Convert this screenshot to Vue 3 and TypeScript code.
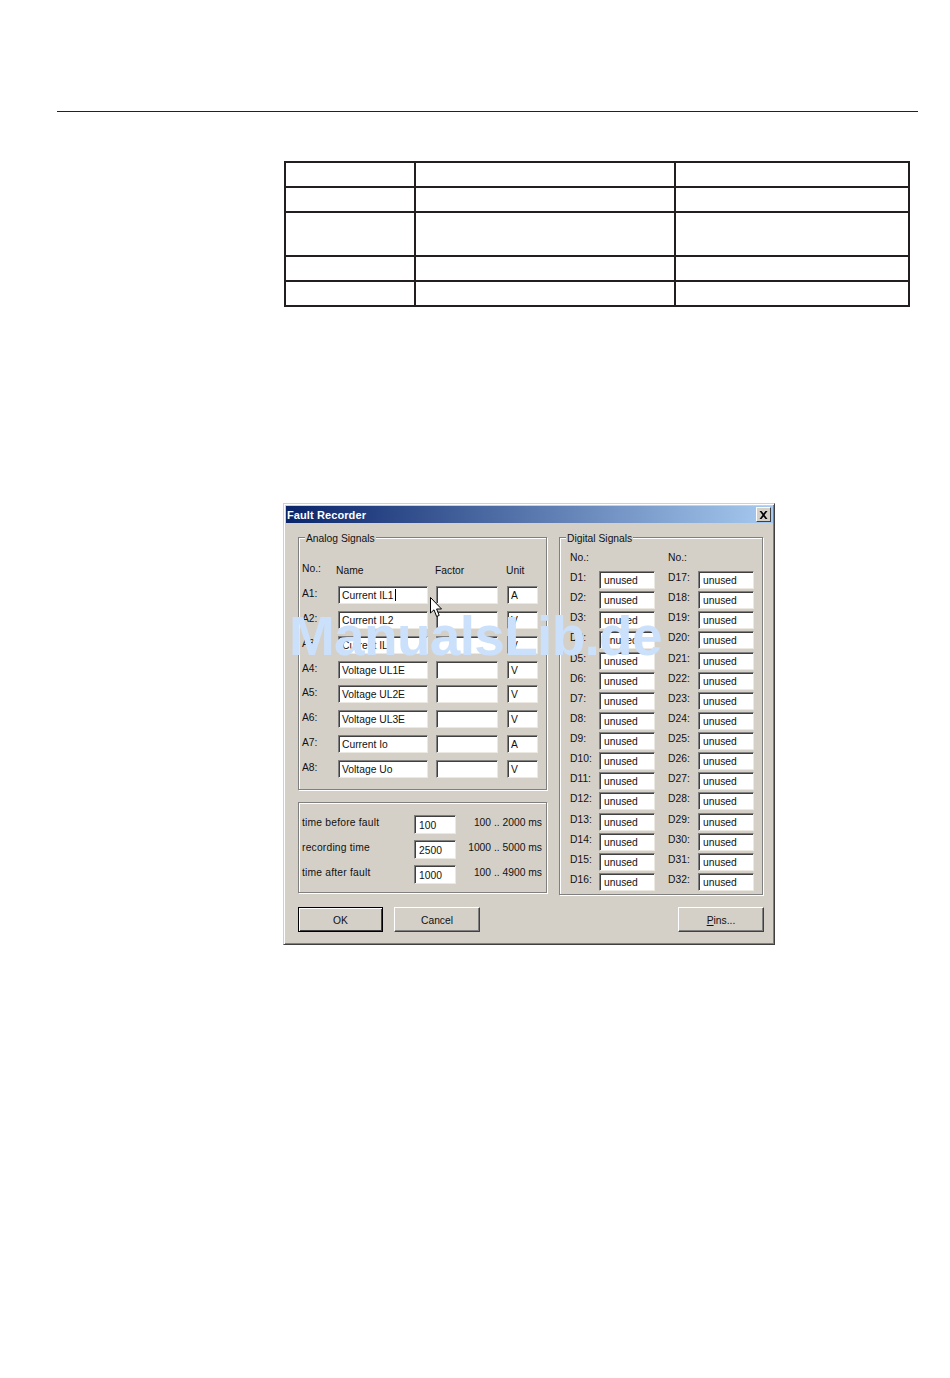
<script setup lang="ts">
const analog = [
  { no: 'A1', name: 'Current IL1', unit: 'A', caret: true },
  { no: 'A2', name: 'Current IL2', unit: 'V' },
  { no: 'A3', name: 'Current IL3', unit: 'V' },
  { no: 'A4', name: 'Voltage UL1E', unit: 'V' },
  { no: 'A5', name: 'Voltage UL2E', unit: 'V' },
  { no: 'A6', name: 'Voltage UL3E', unit: 'V' },
  { no: 'A7', name: 'Current Io', unit: 'A' },
  { no: 'A8', name: 'Voltage Uo', unit: 'V' },
]
const times = [
  { label: 'time before fault', value: '100', range: '100 .. 2000 ms' },
  { label: 'recording time', value: '2500', range: '1000 .. 5000 ms' },
  { label: 'time after fault', value: '1000', range: '100 .. 4900 ms' },
]
const digitalRows = Array.from({ length: 16 }, (_, i) => i + 1)
const tableRows = [0, 1, 2, 3, 4]
</script>

<template>
  <div class="page">
    <div class="rule"></div>
    <div class="doc-table">
      <div v-for="r in tableRows" :key="r" class="doc-row" :class="{ tall: r === 2 }">
        <div class="doc-cell"></div>
        <div class="doc-cell"></div>
        <div class="doc-cell"></div>
      </div>
    </div>

    <div class="dialog">
      <div class="titlebar">
        <span class="title">Fault Recorder</span>
        <span class="close">
          <svg width="9" height="8" viewBox="0 0 9 8">
            <path d="M0.5 0 L2.5 0 L4.5 2.5 L6.5 0 L8.5 0 L5.5 4 L8.5 8 L6.5 8 L4.5 5.5 L2.5 8 L0.5 8 L3.5 4 Z" fill="#000" />
          </svg>
        </span>
      </div>

      <div class="body">
        <div class="columns">
          <div class="left">
            <section class="group analog">
              <span class="legend">Analog Signals</span>
              <div class="analog-grid">
                <span class="lbl">No.:</span>
                <span class="h-col h-name">Name</span>
                <span class="h-col h-factor">Factor</span>
                <span class="h-col h-unit">Unit</span>
                <template v-for="a in analog" :key="a.no">
                  <span class="lbl">{{ a.no }}:</span>
                  <div class="field">{{ a.name }}<i v-if="a.caret" class="caret"></i></div>
                  <div class="field"></div>
                  <div class="field unit-field">{{ a.unit }}</div>
                </template>
              </div>
            </section>

            <section class="group timing">
              <template v-for="t in times" :key="t.label">
                <span class="lbl t-lbl">{{ t.label }}</span>
                <div class="field tall-field">{{ t.value }}</div>
                <span class="lbl range">{{ t.range }}</span>
              </template>
            </section>
          </div>

          <section class="group digital">
            <span class="legend">Digital Signals</span>
            <div class="digital-grid">
              <span class="lbl">No.:</span>
              <span></span>
              <span class="lbl">No.:</span>
              <span></span>
              <template v-for="n in digitalRows" :key="n">
                <span class="lbl d-lbl">D{{ n }}:</span>
                <div class="field d-field">unused</div>
                <span class="lbl d-lbl">D{{ n + 16 }}:</span>
                <div class="field d-field">unused</div>
              </template>
            </div>
          </section>
        </div>

        <div class="buttons">
          <button class="btn default" type="button"><span>OK</span></button>
          <button class="btn cancel" type="button"><span>Cancel</span></button>
          <button class="btn pins" type="button"><span><u>P</u>ins...</span></button>
        </div>
      </div>

      <svg class="cursor" width="14" height="22" viewBox="0 0 14 22">
        <path d="M0.5 0.5 L0.5 16 L4 12.8 L6.6 19.5 L9.2 18.4 L6.6 12 L11.5 12 Z" fill="#fff" stroke="#000" stroke-width="1" />
      </svg>
      <div class="watermark">ManualsLib.de</div>
    </div>
  </div>
</template>

<style>
html, body { margin: 0; background: #fff; }
</style>

<style scoped>
.page {
  width: 950px;
  height: 1378px;
  box-sizing: border-box;
  padding-top: 111px;
  background: #fff;
  overflow: hidden;
  font-family: "Liberation Sans", Arial, sans-serif;
  font-size: 10.3px;
  color: #111;
}
.rule {
  width: 861px;
  height: 1px;
  margin-left: 57px;
  background: #222;
}
.doc-table {
  box-sizing: border-box;
  width: 626px;
  margin: 49px 0 0 284px;
  border: solid #231f20;
  border-width: 2px 2px 0 2px;
}
.doc-row {
  display: grid;
  grid-template-columns: 128px 260px 234px;
  height: 23px;
  border-bottom: 2px solid #231f20;
}
.doc-row.tall { height: 42px; }
.doc-cell { box-sizing: border-box; }
.doc-cell + .doc-cell { border-left: 2px solid #231f20; }

.dialog {
  position: relative;
  box-sizing: border-box;
  width: 492px;
  height: 442px;
  margin: 196px 0 0 283px;
  padding: 3px;
  background: #d4d0c8;
  border: 1px solid;
  border-color: #d4d0c8 #404040 #404040 #d4d0c8;
  box-shadow: inset 1px 1px 0 #fff, inset -1px -1px 0 #808080;
}
.titlebar {
  display: flex;
  align-items: center;
  justify-content: space-between;
  height: 17px;
  margin: -1px -2px 0 -1px;
  padding: 0 2px 0 1px;
  background: linear-gradient(90deg, #0a246a, #a6caf0);
}
.title {
  color: #fff;
  font-size: 11px;
  font-weight: 700;
  letter-spacing: 0.1px;
}
.close {
  display: flex;
  align-items: center;
  justify-content: center;
  box-sizing: border-box;
  width: 15px;
  height: 15px;
  background: #d4d0c8;
  border: 1px solid;
  border-color: #fff #404040 #404040 #fff;
}
.body { padding: 14px 0 0 11px; }
.columns { display: flex; gap: 12px; align-items: flex-start; }
.left { display: flex; flex-direction: column; gap: 12px; width: 249px; }

.group {
  position: relative;
  box-sizing: border-box;
  border: 1px solid #808080;
  box-shadow: inset 1px 1px 0 #fff, 1px 1px 0 #fff;
}
.legend {
  position: absolute;
  top: -6px;
  left: 6px;
  padding: 0 1px;
  line-height: 14px;
  background: #d4d0c8;
}
.lbl { line-height: 14px; margin-top: 1px; white-space: nowrap; }
.field {
  position: relative;
  box-sizing: border-box;
  height: 18px;
  padding-left: 3px;
  line-height: 18px;
  background: #fff;
  color: #111;
  white-space: nowrap;
  border: 1px solid;
  border-color: #808080 #ece9e2 #ece9e2 #808080;
  box-shadow: inset 1px 1px 0 #404040;
}
.caret {
  display: inline-block;
  width: 1px;
  height: 12px;
  margin-left: 1px;
  vertical-align: -2px;
  background: #000;
}

.analog-grid {
  display: grid;
  column-gap: 8px;
  grid-template-columns: 28px 90px 62px 32px;
  grid-template-rows: 25px repeat(8, 24.86px);
  margin: 23px 0 4px 3px;
}
.unit-field { margin-left: 1px; }
.h-col { line-height: 14px; margin-top: 3px; }
.h-name { margin-left: -2px; }
.h-factor { margin-left: -1px; }

.timing {
  display: grid;
  grid-template-columns: 112px 42px 86px;
  grid-template-rows: repeat(3, 25px);
  height: 91px;
  padding: 12px 0 0 3px;
}
.t-lbl { letter-spacing: 0.2px; }
.tall-field { height: 19px; line-height: 20px; padding-left: 4px; }
.range { text-align: right; }

.digital { width: 204px; height: 358px; }
.digital-grid {
  display: grid;
  grid-template-columns: 29px 56px 43px 56px;
  grid-template-rows: 21px repeat(16, 20.13px);
  margin: 12px 0 0 10px;
}
.digital-grid > :nth-child(4n + 3) { margin-left: 13px; }
.d-lbl { margin-top: 0; }
.d-field { padding-left: 4px; line-height: 18px; }

.buttons {
  display: flex;
  gap: 11px;
  margin-top: 12px;
  width: 466px;
}
.btn {
  box-sizing: border-box;
  height: 25px;
  width: 86px;
  margin: 0;
  padding: 2px 0 0;
  font: inherit;
  color: #111;
  background: #d4d0c8;
  border: 1px solid;
  border-color: #fff #404040 #404040 #fff;
  box-shadow: inset -1px -1px 0 #808080;
}
.btn.default {
  width: 85px;
  border: 1px solid #000;
  box-shadow: inset 1px 1px 0 #fff, inset -1px -1px 0 #404040;
}
.btn.pins { margin-left: auto; }
.cursor { position: absolute; left: 146px; top: 93px; }
.watermark {
  position: absolute;
  left: 5px;
  top: 102px;
  font-size: 55px;
  line-height: 60px;
  font-weight: 700;
  letter-spacing: -0.7px;
  color: #cbe0fa;
  white-space: nowrap;
  pointer-events: none;
}
</style>
